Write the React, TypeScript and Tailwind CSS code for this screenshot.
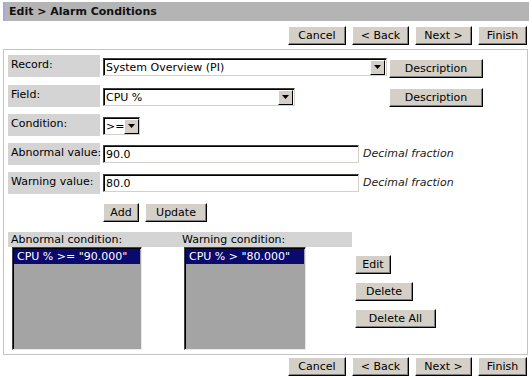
import React from "react";

function Btn({ label, w }: { label: string; w: string }) {
  return (
    <button
      className={`${w} h-[19px] bg-[#d4d0c8] text-[11px] text-black leading-none border border-t-white border-l-white border-r-black border-b-black shadow-[inset_-1px_-1px_0_#808080] flex items-center justify-center`}
    >
      {label}
    </button>
  );
}

function Arrow() {
  return (
    <span className="w-[15px] h-[15px] bg-[#d4d0c8] border border-t-white border-l-white border-r-black border-b-black flex items-center justify-center shrink-0">
      <svg width="7" height="4" viewBox="0 0 7 4">
        <path d="M0 0h7L3.5 4z" fill="#000" />
      </svg>
    </span>
  );
}

function Select({ value, w }: { value: string; w: string }) {
  return (
    <div
      className={`${w} h-[18px] bg-white border border-t-[#404040] border-l-[#404040] border-r-[#d4d0c8] border-b-[#d4d0c8] shadow-[inset_1px_1px_0_#000] flex items-center justify-between pl-[2px] pr-[1px]`}
    >
      <span className="text-[11px] leading-none whitespace-nowrap">{value}</span>
      <Arrow />
    </div>
  );
}

function Input({ value }: { value: string }) {
  return (
    <div className="w-[256px] h-[18px] bg-white border border-t-[#404040] border-l-[#404040] border-r-[#d4d0c8] border-b-[#d4d0c8] shadow-[inset_1px_1px_0_#000] flex items-center pl-[2px]">
      <span className="text-[11px] leading-none">{value}</span>
    </div>
  );
}

function Label({ text }: { text: string }) {
  return (
    <div className="w-[92px] h-[22px] bg-[#d4d4d4] pl-[3px] pt-[3px] text-[11px] leading-[13px] shrink-0 whitespace-nowrap">
      {text}
    </div>
  );
}

function NavButtons() {
  return (
    <div className="flex justify-end gap-[6px] pr-[5px]">
      <Btn label="Cancel" w="w-[58px]" />
      <Btn label="< Back" w="w-[57px]" />
      <Btn label="Next >" w="w-[57px]" />
      <Btn label="Finish" w="w-[49px]" />
    </div>
  );
}

function ListBox({ item, w }: { item: string; w: string }) {
  return (
    <div
      className={`${w} h-[103px] bg-[#a4a4a4] border border-t-[#404040] border-l-[#404040] border-r-[#e8e8e8] border-b-[#e8e8e8] shadow-[inset_1px_1px_0_#000] p-[1px]`}
    >
      <div className="h-[15px] bg-[#0a0a6e] text-white text-[11px] leading-[15px] pl-[3px] whitespace-nowrap">
        {item}
      </div>
    </div>
  );
}

export default function App() {
  return (
    <div className="w-[532px] h-[378px] bg-white text-black font-['DejaVu_Sans',Verdana,sans-serif] pt-[2px]">
      {/* Title bar */}
      <div className="mx-[3px] h-[19px] bg-[#b4b4b4] border-l-2 border-l-[#a8a8d8] pl-[4px] flex items-center">
        <span className="text-[11px] font-bold leading-none text-[#111]">Edit &gt; Alarm Conditions</span>
      </div>

      <div className="mt-[5px]">
        <NavButtons />
      </div>

      {/* Form panel */}
      <div className="ml-[3px] mr-[4px] mt-[4px] h-[306px] border border-[#c4c4c4] pl-[4px] pt-[5px]">
        <div className="flex flex-col gap-[7px]">
          <div className="flex">
            <Label text="Record:" />
            <div className="w-[289px] pl-[3px] pt-[3px]">
              <Select value="System Overview (PI)" w="w-[284px]" />
            </div>
            <div className="pt-[4px]">
              <Btn label="Description" w="w-[94px]" />
            </div>
          </div>
          <div className="flex">
            <Label text="Field:" />
            <div className="w-[289px] pl-[3px] pt-[3px]">
              <Select value="CPU %" w="w-[192px]" />
            </div>
            <div className="pt-[3px]">
              <Btn label="Description" w="w-[94px]" />
            </div>
          </div>
          <div className="flex">
            <Label text="Condition:" />
            <div className="pl-[3px] pt-[3px]">
              <Select value=">=" w="w-[37px]" />
            </div>
          </div>
          <div className="flex">
            <Label text="Abnormal value:" />
            <div className="pl-[3px] pt-[2px]">
              <Input value="90.0" />
            </div>
            <span className="pl-[4px] pt-[5px] text-[11px] italic leading-none text-[#222]">Decimal fraction</span>
          </div>
          <div className="flex">
            <Label text="Warning value:" />
            <div className="pl-[3px] pt-[2px]">
              <Input value="80.0" />
            </div>
            <span className="pl-[4px] pt-[5px] text-[11px] italic leading-none text-[#222]">Decimal fraction</span>
          </div>
        </div>

        <div className="flex gap-[6px] pl-[95px] mt-[9px]">
          <Btn label="Add" w="w-[36px]" />
          <Btn label="Update" w="w-[62px]" />
        </div>

        <div className="flex mt-[10px]">
          <div>
            <div className="w-[344px] h-[15px] bg-[#d4d4d4] flex text-[11px] leading-[15px]">
              <span className="w-[174px] pl-[3px]">Abnormal condition:</span>
              <span>Warning condition:</span>
            </div>
            <div className="flex">
              <div className="pl-[4px] w-[176px]">
                <ListBox item={'CPU % >= "90.000"'} w="w-[130px]" />
              </div>
              <ListBox item={'CPU % > "80.000"'} w="w-[122px]" />
            </div>
          </div>
          <div className="flex flex-col gap-[8px] pl-[3px] pt-[23px]">
            <Btn label="Edit" w="w-[36px]" />
            <Btn label="Delete" w="w-[58px]" />
            <Btn label="Delete All" w="w-[81px]" />
          </div>
        </div>
      </div>

      <div className="mt-[2px]">
        <NavButtons />
      </div>
    </div>
  );
}
